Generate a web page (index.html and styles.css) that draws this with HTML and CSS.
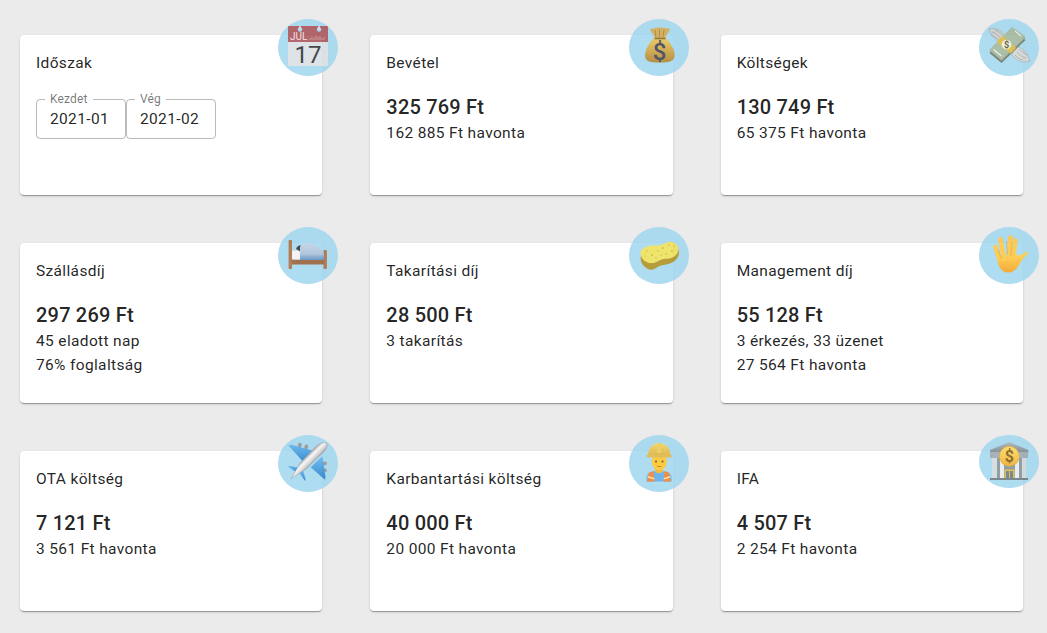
FILE: index.html
```html
<!DOCTYPE html>
<html lang="hu">
<head>
<meta charset="utf-8">
<title>Statisztika</title>
<link rel="stylesheet" href="styles.css">
</head>
<body>
<svg class="defs" width="0" height="0" aria-hidden="true">
  <defs>
    <linearGradient id="gold" x1="0" y1="0" x2="0" y2="1"><stop offset="0" stop-color="#ecc653"/><stop offset="1" stop-color="#a87c22"/></linearGradient>
    <linearGradient id="hat" x1="0" y1="0" x2="0" y2="1"><stop offset="0" stop-color="#f6d862"/><stop offset="1" stop-color="#d6a82f"/></linearGradient>
    <linearGradient id="blanket" x1="0" y1="0" x2="0" y2="1"><stop offset="0" stop-color="#bccfe3"/><stop offset=".65" stop-color="#a3bcd8"/><stop offset="1" stop-color="#4f86bf"/></linearGradient>
    <linearGradient id="skin" x1="0" y1="0" x2="0" y2="1"><stop offset="0" stop-color="#ffd343"/><stop offset="1" stop-color="#f39c16"/></linearGradient>
    <linearGradient id="silver" x1="0" y1="0" x2="1" y2="1"><stop offset=".4" stop-color="#a0a0a0"/><stop offset=".46" stop-color="#f6f6f6"/><stop offset=".53" stop-color="#cfcfcf"/><stop offset=".62" stop-color="#6f6f6f"/></linearGradient>
    <linearGradient id="wing" x1="0" y1="0" x2="0" y2="1"><stop offset="0" stop-color="#55b2ee"/><stop offset="1" stop-color="#1a78c8"/></linearGradient>
    <linearGradient id="coin" x1="0" y1="0" x2="0" y2="1"><stop offset="0" stop-color="#ffdc5a"/><stop offset="1" stop-color="#eda81f"/></linearGradient>
    <linearGradient id="stone" x1="0" y1="0" x2="0" y2="1"><stop offset="0" stop-color="#aab4ba"/><stop offset="1" stop-color="#6f7d86"/></linearGradient>
  </defs>
</svg>
<main class="grid">

  <section class="card">
    <h2 class="title">Időszak</h2>
    <div class="range">
      <div class="field"><span class="legend">Kezdet</span><span class="value">2021-01</span></div>
      <div class="field"><span class="legend">Vég</span><span class="value">2021-02</span></div>
    </div>
    <div class="badge">
      <svg class="emoji" viewBox="0 0 40 40">
        <rect width="40" height="40" rx="1" fill="#d9dfe4"/>
        <path d="M0 1a1 1 0 0 1 1-1h38a1 1 0 0 1 1 1v15H0z" fill="#a64e54"/>
        <circle cx="12" cy="3.500" r="2.200" fill="#a5d6ee"/><circle cx="31" cy="3.500" r="2.200" fill="#a5d6ee"/>
        <rect x="11.400" y="0" width="1.200" height="3" fill="#eef1f3"/><rect x="30.400" y="0" width="1.200" height="3" fill="#eef1f3"/>
        <text class="cal-month" x="2" y="14">JUL</text>
        <path d="M22 14v-2M24 14v-3M26 14v-2M28 14v-4M30 14v-3M32 14v-4M34 14v-2M36 14v-3" stroke="#bd7d81" stroke-width="1.300"/>
        <text class="cal-day" x="20" y="36.500" text-anchor="middle">17</text>
      </svg>
    </div>
  </section>

  <section class="card">
    <h2 class="title">Bevétel</h2>
    <p class="amount">325 769 Ft</p>
    <p class="note">162 885 Ft havonta</p>
    <div class="badge">
      <svg class="emoji" viewBox="0 0 40 40">
        <path d="M11 3c3 .5 5-1.500 9.500-1.500S28 3 31 2.500c-1 4-4 6.500-5 10H16c-1-3.500-4-6-5-9.500z" fill="#d0a64a"/>
        <path d="M16 4l1 7M20.500 3v8M25 4l-1 7" stroke="#97742a" stroke-width=".8" fill="none"/>
        <path d="M16 11h10c5 5 9.500 12 9.500 18 0 6-4 7.500-15 7.500S6 35 6 29c0-6 5-13 10-18z" fill="url(#gold)"/>
        <path d="M15.500 11.500h11v1.800h-11z" fill="#7d5f1c"/>
        <text class="bag-sign" x="20.500" y="34" text-anchor="middle">$</text>
      </svg>
    </div>
  </section>

  <section class="card">
    <h2 class="title">Költségek</h2>
    <p class="amount">130 749 Ft</p>
    <p class="note">65 375 Ft havonta</p>
    <div class="badge">
      <svg class="emoji" viewBox="0 0 40 40">
        <path d="M0 3c6-2 13 1 17 8l-4 6C8 15 2 10 0 3z" fill="#c8ccca" stroke="#8d9492" stroke-width=".5"/>
        <path d="M3 6c3 1 6 3 9 7M2 9c3 1 5 3 8 5M6 4c3 1 6 3 8 6" stroke="#8d9492" stroke-width=".7" fill="none"/>
        <path d="M41 35c-5 2-13 1-18-6l3-9c7 1 12 6 15 15z" fill="#d0d4d2" stroke="#8d9492" stroke-width=".5"/>
        <path d="M37 32c-3-1-6-2-9-6M39 29c-3-1-6-3-9-6M34 34c-3-1-6-2-8-5" stroke="#8d9492" stroke-width=".7" fill="none"/>
        <path d="M.5 27L12.500 37 36.500 14 23 4z" fill="#5e6e5c"/>
        <path d="M.5 25L12.500 35 36.500 12 23 2.500z" fill="#909c8c"/>
        <path d="M.5 23.500L12.500 33.500 36.500 10.500 23 1z" fill="#9db39a"/>
        <path d="M4.500 23.500L12.500 30M26 5l6 5" stroke="#e6eee2" stroke-width="1.200"/>
        <path d="M8 16l13.500 11.500 5.500-5.500L13.500 10z" fill="#dcb635"/>
        <circle cx="17.500" cy="18.700" r="4.800" fill="#f0ecd2"/>
        <text class="wing-sign" x="17.500" y="22.300" text-anchor="middle">$</text>
      </svg>
    </div>
  </section>

  <section class="card">
    <h2 class="title">Szállásdíj</h2>
    <p class="amount">297 269 Ft</p>
    <p class="note">45 eladott nap</p>
    <p class="note">76% foglaltság</p>
    <div class="badge">
      <svg class="emoji" viewBox="0 0 40 40">
        <rect x="3" y="25.500" width="34" height="5" fill="#8f5a2e"/>
        <rect x=".6" y="6" width="3.400" height="29" rx="1" fill="#a5683a"/>
        <rect x="35.500" y="16" width="3.400" height="19" rx="1" fill="#a5683a"/>
        <rect x="4" y="16.500" width="10" height="9" rx="1.500" fill="#f2f2f2"/>
        <path d="M8 15c1-3 3-4 6-4l2 4-3 3z" fill="#2f2f33"/>
        <path d="M12 26V14c0-3 2-5 6-5 5 0 11 2 14 5.500 2 2 4 4 4 5.500v6z" fill="url(#blanket)"/>
        <path d="M12 22.500h24" stroke="#7fa0c4" stroke-width=".6"/>
      </svg>
    </div>
  </section>

  <section class="card">
    <h2 class="title">Takarítási díj</h2>
    <p class="amount">28 500 Ft</p>
    <p class="note">3 takarítás</p>
    <div class="badge">
      <svg class="emoji" viewBox="0 0 40 40">
        <path d="M2 22c-1 3 0 6 2 9 4 5 9 6 13 3 4-3 8-3 12-4 6-1 11-6 11-12 0-3-2-5-4-6L2 22z" fill="#a98c1a"/>
        <path d="M1.500 19c0 5 4 9 9 10 6 1 9-3 14-4 3-.5 6 0 9-1.500 4-2 6-5 6-8.500 0-3-2.500-6-7-7-5-1-8 3-13 3.500-5 .5-7-1-11 1C4 14.500 1.500 15.500 1.500 19z" fill="#ecdf52"/>
        <g fill="#c7b22c">
          <circle cx="8" cy="17" r=".8"/><circle cx="13" cy="21" r=".9"/><circle cx="19" cy="17" r=".8"/><circle cx="24" cy="14" r=".9"/><circle cx="30" cy="11" r=".8"/><circle cx="33" cy="17" r=".9"/><circle cx="27" cy="20" r=".8"/><circle cx="17" cy="24" r=".8"/><circle cx="6" cy="22" r=".7"/><circle cx="22" cy="21" r=".7"/><circle cx="35" cy="12" r=".7"/>
        </g>
      </svg>
    </div>
  </section>

  <section class="card">
    <h2 class="title">Management díj</h2>
    <p class="amount">55 128 Ft</p>
    <p class="note">3 érkezés, 33 üzenet</p>
    <p class="note">27 564 Ft havonta</p>
    <div class="badge">
      <svg class="emoji" viewBox="0 0 40 40">
        <path d="M8 24c2-2 20-4 22-3 2 .5 3 0 4-1.500 1-1.500 4-2.500 5-.5.3 1-1 1.500-2.500 3-3 3-5 6-7.500 10.500-2.500 4-6 6-10 6-6 0-10-5-11-14.500z" fill="url(#skin)"/>
        <g stroke-width="4.600" stroke-linecap="round" fill="none" stroke="#fdc43a">
          <path d="M6.500 13l4 12"/>
          <path d="M11.500 5.500l3.500 19"/>
          <path d="M21.500 3.500l-1.500 20"/>
          <path d="M26.500 6.500l-2.500 18"/>
        </g>
        <path d="M9 15l3.500 10M17.500 7l1 14M23 8l-1.200 14" stroke="#d9921a" stroke-width=".6" fill="none"/>
      </svg>
    </div>
  </section>

  <section class="card">
    <h2 class="title">OTA költség</h2>
    <p class="amount">7 121 Ft</p>
    <p class="note">3 561 Ft havonta</p>
    <div class="badge">
      <svg class="emoji" viewBox="0 0 40 40">
        <rect x="10" y="1" width="3.500" height="5" rx="1.500" transform="rotate(15 12 3.500)" fill="#8f8f8f"/>
        <rect x="16.500" y="2.500" width="3.500" height="5" rx="1.500" transform="rotate(15 18 5)" fill="#8f8f8f"/>
        <rect x="34" y="20" width="5" height="3.500" rx="1.500" transform="rotate(-20 36 22)" fill="#8f8f8f"/>
        <rect x="34" y="27" width="5" height="3.500" rx="1.500" transform="rotate(-20 36 29)" fill="#8f8f8f"/>
        <path d="M.3 3.300l3-.5L25.300 8.700 14.700 19.300z" fill="url(#wing)"/>
        <path d="M37 37.700l.5-3L34.300 14.300 22.700 25.300z" fill="url(#wing)"/>
        <path d="M0 24.500l2-.5 9 1.500-3.500 4z" fill="url(#wing)"/>
        <path d="M17 39l.5-2-2.500-9-3.500 3z" fill="url(#wing)"/>
        <path d="M38.500 1c-3.500-1-7 .5-10.500 3.500L12 21 3.200 36.800 18 27 35.500 10c3-3 4.500-6 3-9z" fill="url(#silver)" stroke="#7a7a7a" stroke-width=".4"/>
      </svg>
    </div>
  </section>

  <section class="card">
    <h2 class="title">Karbantartási költség</h2>
    <p class="amount">40 000 Ft</p>
    <p class="note">20 000 Ft havonta</p>
    <div class="badge">
      <svg class="emoji" viewBox="0 0 40 40">
        <path d="M7.500 39.500v-4c0-4 4-5.500 9-6.500h7c5 1 9 2.500 9 6.500v4z" fill="#58a8e8"/>
        <path d="M8 39.500l2-9 4.500-1.500 1 10.500zM32 39.500l-2-9-4.500-1.500-1 10.500z" fill="#f07a28"/>
        <path d="M8.800 34l6.500 2v1.500l-6.800-2zM31.200 34l-6.500 2v1.500l6.800-2z" fill="#f5e6a0"/>
        <rect x="16" y="24" width="8" height="7" rx="3" fill="#f5b01e"/>
        <ellipse cx="20.300" cy="20" rx="7.500" ry="8.500" fill="#fdc21f"/>
        <circle cx="17" cy="19.500" r="1" fill="#4a3a20"/><circle cx="23.500" cy="19.500" r="1" fill="#4a3a20"/>
        <path d="M18.500 24.500h3.500" stroke="#a86a20" stroke-width=".9" stroke-linecap="round"/>
        <path d="M9 14C9 6 14 1 20.300 1S31.500 6 31.500 14z" fill="url(#hat)"/>
        <rect x="7.500" y="12.500" width="25.500" height="3" rx="1.500" fill="#dcb340"/>
        <rect x="18" y="1" width="4.500" height="10" rx="1.500" fill="#ecc94f"/>
      </svg>
    </div>
  </section>

  <section class="card">
    <h2 class="title">IFA</h2>
    <p class="amount">4 507 Ft</p>
    <p class="note">2 254 Ft havonta</p>
    <div class="badge badge-short">
      <svg class="emoji" viewBox="0 0 40 40">
        <path d="M1 8L20.300 0 39.300 8v3H1z" fill="url(#stone)"/>
        <rect x="1" y="10" width="38" height="6" fill="#97a4ac"/>
        <rect x="3" y="16" width="34" height="20" fill="#7f8e97"/>
        <rect x="3" y="16" width="5" height="20" fill="#cfd8dc"/>
        <rect x="11" y="16" width="4" height="20" fill="#e4eaed"/>
        <rect x="26" y="16" width="4" height="20" fill="#e4eaed"/>
        <rect x="33" y="16" width="4" height="20" fill="#cfd8dc"/>
        <rect x="15.500" y="27.500" width="10" height="9" fill="#e8b32e"/>
        <rect x="17" y="29" width="3" height="7.500" fill="#5f7684"/><rect x="21" y="29" width="3" height="7.500" fill="#5f7684"/>
        <rect x="1" y="36" width="38" height="2" fill="#66747d"/>
        <circle cx="20.300" cy="14.300" r="10" fill="url(#coin)" stroke="#d9941a" stroke-width=".6"/>
        <text class="bank-sign" x="20.300" y="20" text-anchor="middle">$</text>
      </svg>
    </div>
  </section>

</main>
</body>
</html>
```

FILE: styles.css
```css
* {
  box-sizing: border-box;
}

html,
body {
  margin: 0;
  height: 100%;
  overflow: hidden;
}

body {
  background: #ebebeb;
  color: rgba(0, 0, 0, 0.87);
  font-family: Roboto, "Liberation Sans", sans-serif;
}

.defs {
  display: block;
  height: 0;
}

.grid {
  display: grid;
  grid-template-columns: repeat(3, 1fr);
  grid-auto-rows: 160px;
  gap: 48px;
  padding: 35px 24px 22px 20px;
}

.card {
  position: relative;
  padding: 16px;
  background: #fff;
  border-radius: 4px;
  box-shadow: 0 2px 1px -1px rgba(0, 0, 0, 0.2), 0 1px 1px 0 rgba(0, 0, 0, 0.14), 0 1px 3px 0 rgba(0, 0, 0, 0.12);
}

.title {
  margin: 0 0 20px;
  font-size: 15.5px;
  font-weight: 400;
  line-height: 24px;
  letter-spacing: 0.35px;
}

.amount {
  margin: 0 0 2px;
  font-size: 20px;
  font-weight: 500;
  line-height: 24px;
  letter-spacing: 0.2px;
}

.note {
  margin: 0;
  font-size: 15.5px;
  line-height: 24px;
  letter-spacing: 0.35px;
}

.range {
  display: flex;
  margin-top: 24px;
}

.field {
  position: relative;
  width: 90px;
  height: 40px;
  padding: 9px 13px;
  border: 1px solid rgba(0, 0, 0, 0.27);
  border-radius: 4px;
}

.legend {
  position: absolute;
  top: -7px;
  left: 8px;
  padding: 0 5px;
  background: #fff;
  color: rgba(0, 0, 0, 0.54);
  font-size: 12px;
  line-height: 13px;
  letter-spacing: 0.15px;
}

.value {
  font-size: 15.5px;
  line-height: 20px;
  letter-spacing: 0.35px;
}

.badge {
  position: absolute;
  top: -16px;
  right: -16px;
  width: 60px;
  height: 57px;
  padding: 7px 10px 0;
  background: #a0d6ef;
  border-radius: 50%;
  opacity: 0.85;
}

.badge-short {
  height: 53px;
}

.emoji {
  display: block;
  width: 40px;
  height: 40px;
  overflow: visible;
}

.cal-month {
  fill: #f0dfdf;
  font-size: 10px;
  font-weight: 400;
}

.cal-day {
  fill: #25282b;
  font-size: 24px;
}

.bag-sign {
  fill: #33384c;
  font-size: 24px;
  font-weight: 500;
}

.wing-sign {
  fill: #3d4a3a;
  font-size: 9px;
  font-weight: 700;
}

.bank-sign {
  fill: #7a5410;
  font-size: 16px;
  font-weight: 700;
}
```
